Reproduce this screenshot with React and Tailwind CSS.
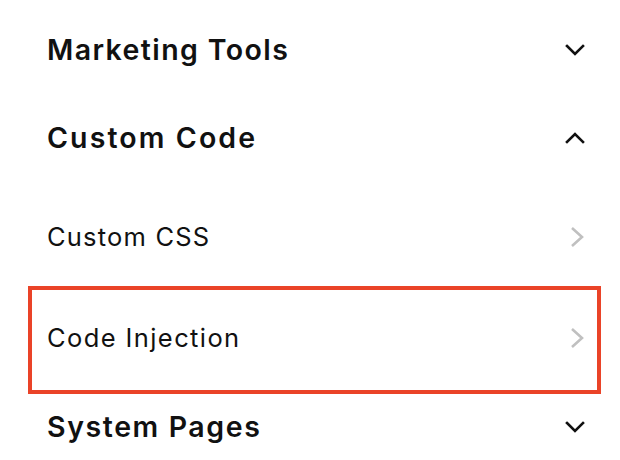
const Down = () => (
  <svg width="20" height="12" viewBox="0 0 20 12" fill="none">
    <polyline points="2,2 10,10 18,2" stroke="#111" strokeWidth="2.6" strokeLinecap="square" />
  </svg>
);

const Up = () => (
  <svg width="20" height="12" viewBox="0 0 20 12" fill="none">
    <polyline points="2,10 10,2 18,10" stroke="#111" strokeWidth="2.6" strokeLinecap="square" />
  </svg>
);

const Right = () => (
  <svg width="14" height="22" viewBox="0 0 14 22" fill="none">
    <polyline points="2,2 12,11 2,20" stroke="#c0c0c0" strokeWidth="2.6" />
  </svg>
);

export default function App() {
  return (
    <div className="w-[620px] h-[460px] overflow-hidden bg-white text-[#111]" style={{ fontFamily: "Inter, 'Liberation Sans', sans-serif" }}>
      <div className="pl-[28px] pr-[19px]">
        <div className="h-[100px] flex items-center justify-between pl-[19px] pr-[16px]">
          <span className="text-[28.5px] font-semibold tracking-[1.4px]">Marketing Tools</span>
          <Down />
        </div>
        <div className="h-[76px] flex items-center justify-between pl-[19px] pr-[16px]">
          <span className="text-[28.5px] font-semibold tracking-[2.1px]">Custom Code</span>
          <Up />
        </div>
        <div className="h-[110px] pt-[12px] flex items-center justify-between pl-[19px] pr-[17px]">
          <span className="text-[25.5px] tracking-[1.2px]">Custom CSS</span>
          <Right />
        </div>
        <div className="h-[108px] border-[4px] border-[#ea4328] pb-[4px] flex items-center justify-between pl-[15px] pr-[13px]">
          <span className="text-[25.5px] tracking-[1.4px]">Code Injection</span>
          <Right />
        </div>
        <div className="h-[66px] flex items-center justify-between pl-[19px] pr-[16px]">
          <span className="text-[28.5px] font-semibold tracking-[1.6px]">System Pages</span>
          <Down />
        </div>
      </div>
    </div>
  );
}
